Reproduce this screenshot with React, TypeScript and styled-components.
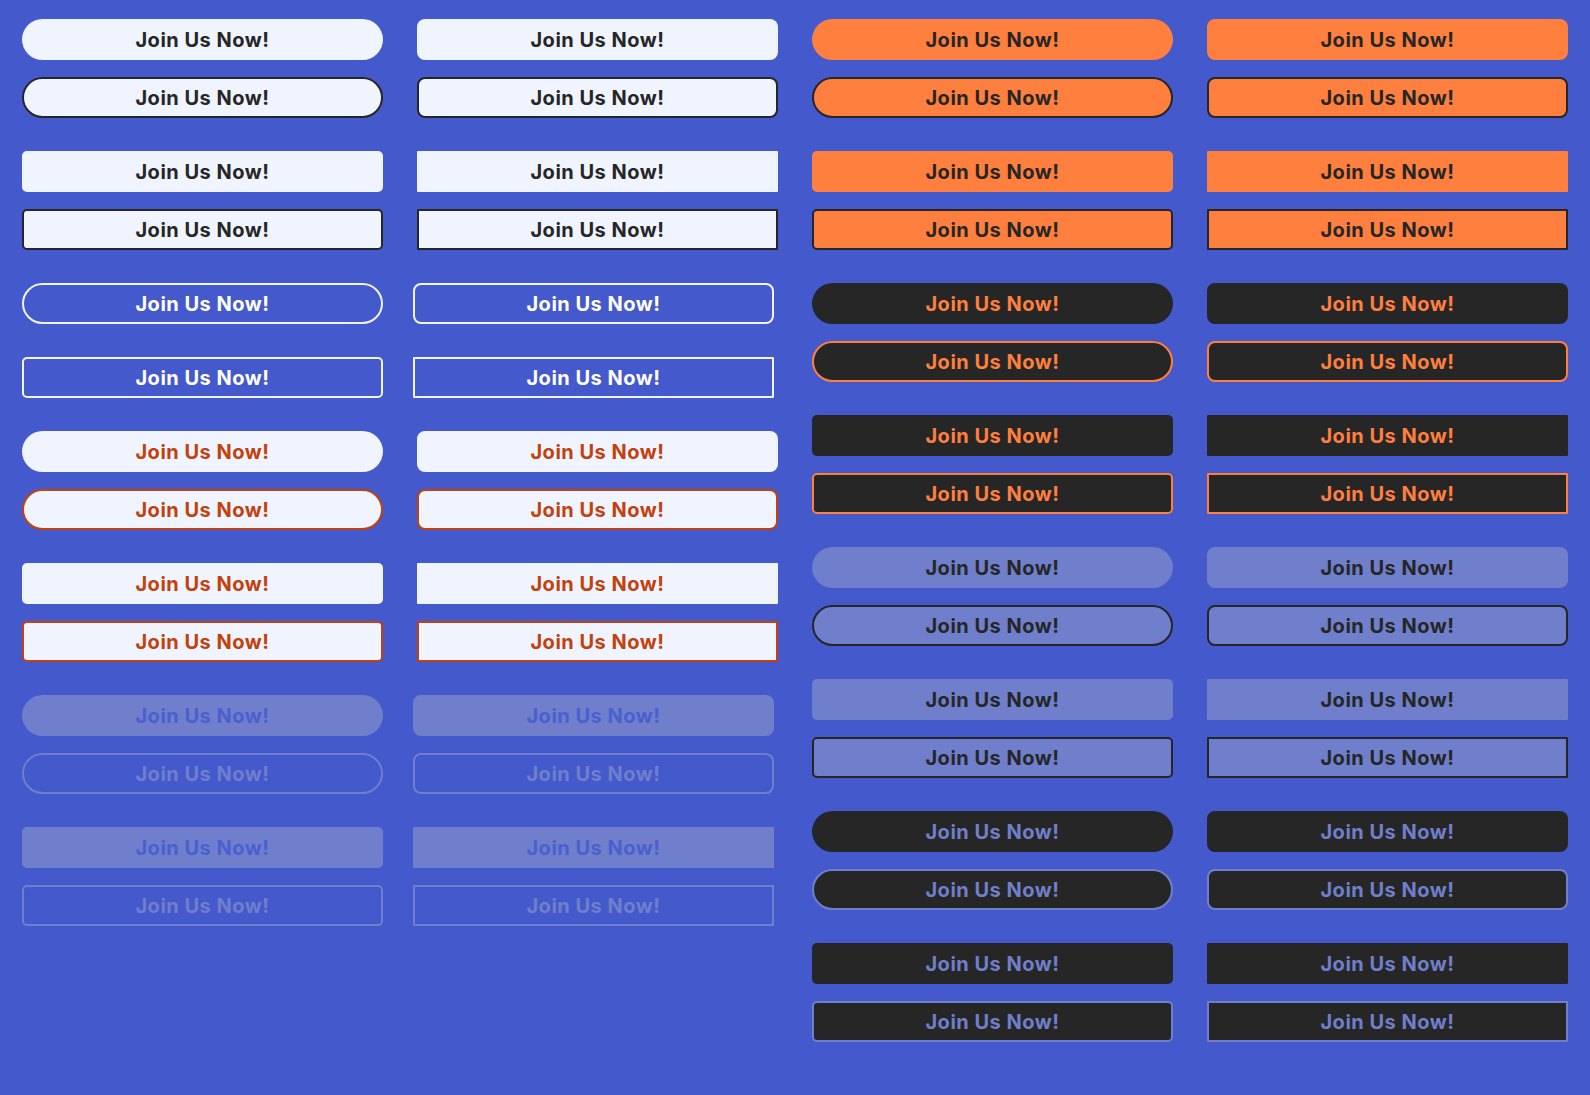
import styled, { createGlobalStyle, css } from "styled-components"

type Tone = "light" | "lightOrange" | "ghostOutline" | "orange" | "darkOrange" | "lilac" | "darkLilac" | "ghost"
type Shape = "pill" | "rect"

interface ButtonSpec {
    tone: Tone
    shape: Shape
    outlined?: boolean
}

interface SectionSpec {
    shift?: boolean
    buttons: ButtonSpec[]
}

const pair = (tone: Tone, shape: Shape): SectionSpec => ({
    buttons: [
        { tone, shape },
        { tone, shape, outlined: true },
    ],
})

const lightColumn = (shiftable: boolean): SectionSpec[] => [
    pair("light", "pill"),
    pair("light", "rect"),
    { shift: shiftable, buttons: [{ tone: "ghostOutline", shape: "pill", outlined: true }] },
    { shift: shiftable, buttons: [{ tone: "ghostOutline", shape: "rect", outlined: true }] },
    pair("lightOrange", "pill"),
    pair("lightOrange", "rect"),
    { ...pair("ghost", "pill"), shift: shiftable },
    { ...pair("ghost", "rect"), shift: shiftable },
]

const darkColumn = (): SectionSpec[] => [
    pair("orange", "pill"),
    pair("orange", "rect"),
    pair("darkOrange", "pill"),
    pair("darkOrange", "rect"),
    pair("lilac", "pill"),
    pair("lilac", "rect"),
    pair("darkLilac", "pill"),
    pair("darkLilac", "rect"),
]

// soft = col 2/4 corners (8px / 1px), otherwise col 1/3 corners (full / 5px)
const columns: { soft: boolean; sections: SectionSpec[] }[] = [
    { soft: false, sections: lightColumn(false) },
    { soft: true, sections: lightColumn(true) },
    { soft: false, sections: darkColumn() },
    { soft: true, sections: darkColumn() },
]

const palette: Record<Tone, { bg: string; fg: string; line: string; outlineBg: string; outlineFg: string }> = {
    light: { bg: "#f0f4ff", fg: "#262626", line: "#262626", outlineBg: "#f0f4ff", outlineFg: "#262626" },
    lightOrange: { bg: "#f0f4ff", fg: "#c2410c", line: "#c2410c", outlineBg: "#f0f4ff", outlineFg: "#c2410c" },
    ghostOutline: { bg: "transparent", fg: "#ffffff", line: "#f0f4ff", outlineBg: "transparent", outlineFg: "#ffffff" },
    ghost: { bg: "#6f7fcb", fg: "#4a5fd0", line: "#6f7fcb", outlineBg: "transparent", outlineFg: "#6f7fcb" },
    orange: { bg: "#ff7f3f", fg: "#262626", line: "#262626", outlineBg: "#ff7f3f", outlineFg: "#262626" },
    darkOrange: { bg: "#262626", fg: "#ff7f3f", line: "#ff7f3f", outlineBg: "#262626", outlineFg: "#ff7f3f" },
    lilac: { bg: "#6f7fcb", fg: "#262626", line: "#262626", outlineBg: "#6f7fcb", outlineFg: "#262626" },
    darkLilac: { bg: "#262626", fg: "#6f7fcb", line: "#6f7fcb", outlineBg: "#262626", outlineFg: "#6f7fcb" },
}

const App = () => (
    <>
        <GlobalStyle />
        <Page>
            {columns.map((col, ci) => (
                <Column key={ci}>
                    {col.sections.map((section, si) => (
                        <Section key={si} $shift={section.shift}>
                            {section.buttons.map((b, bi) => {
                                const c = palette[b.tone]
                                return (
                                    <JoinButton
                                        key={bi}
                                        $bg={b.outlined ? c.outlineBg : c.bg}
                                        $fg={b.outlined ? c.outlineFg : c.fg}
                                        $line={c.line}
                                        $outlined={!!b.outlined}
                                        $radius={b.shape === "pill" ? (col.soft ? 8 : 21) : col.soft ? 1 : 5}
                                    >
                                        Join Us Now!
                                    </JoinButton>
                                )
                            })}
                        </Section>
                    ))}
                </Column>
            ))}
        </Page>
    </>
)

export default App

const GlobalStyle = createGlobalStyle`
    html, body {
        margin: 0;
        padding: 0;
        background: #4459cb;
    }
    body {
        font-family: Inter, "Noto Sans", sans-serif;
    }
`

const Page = styled.div`
    display: grid;
    grid-template-columns: repeat(4, 361px);
    column-gap: 34px;
    align-items: start;
    padding: 19px 22px;
    min-height: 1095px;
    box-sizing: border-box;
    background: #4459cb;
`

const Column = styled.div`
    display: flex;
    flex-direction: column;
    gap: 33px;
`

const Section = styled.div<{ $shift?: boolean }>`
    display: flex;
    flex-direction: column;
    gap: 17px;
    margin-left: ${(p) => (p.$shift ? "-4px" : "0")};
`

const JoinButton = styled.button<{
    $bg: string
    $fg: string
    $line: string
    $outlined: boolean
    $radius: number
}>`
    display: flex;
    align-items: center;
    justify-content: center;
    width: 361px;
    height: 41px;
    padding: 0;
    box-sizing: border-box;
    border: none;
    border-radius: ${(p) => p.$radius}px;
    background: ${(p) => p.$bg};
    color: ${(p) => p.$fg};
    font-family: Inter, "Noto Sans", sans-serif;
    font-size: 20px;
    font-weight: 700;
    letter-spacing: 0.5px;
    cursor: pointer;

    ${(p) =>
        p.$outlined &&
        css`
            border: 2px solid ${p.$line};
        `}
`
